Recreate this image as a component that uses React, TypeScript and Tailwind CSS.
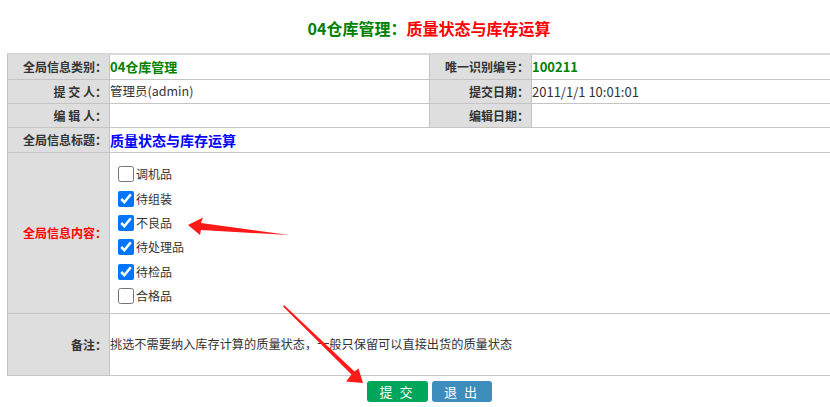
import React from "react";

const options = [
  { name: "调机品", checked: false },
  { name: "待组装", checked: true },
  { name: "不良品", checked: true },
  { name: "待处理品", checked: true },
  { name: "待检品", checked: true },
  { name: "合格品", checked: false },
];

function Label({ children, className = "text-[#333]" }: { children: React.ReactNode; className?: string }) {
  return (
    <div
      className={
        "bg-[#dedede] border-r border-b border-[#c4c4c4] flex items-center justify-end pr-[2px] text-[12px] font-bold " +
        className
      }
    >
      {children}
    </div>
  );
}

function Cell({
  children,
  className = "text-[13px] text-[#333]",
}: {
  children?: React.ReactNode;
  className?: string;
}) {
  return (
    <div className={"border-r border-b border-[#c4c4c4] flex items-center pl-0 " + className}>
      {children}
    </div>
  );
}

export default function App() {
  return (
    <div
      className="relative w-[830px] h-[407px] overflow-hidden bg-white"
      style={{ fontFamily: '"Noto Sans CJK SC", "Noto Sans", sans-serif' }}
    >
      <div className="w-[844px] ml-[7px]">
        <div className="h-[53px] flex items-center justify-center pt-[2px] text-[16px] font-bold">
          <span className="text-[#008000]">04仓库管理：</span>
          <span className="text-[#ff0000]">质量状态与库存运算</span>
        </div>

        <div className="grid grid-cols-[102px_320px_102px_320px] border-l border-[#c4c4c4] border-t-2 border-t-[#d9d9d9]">
          <Label className="h-[25px] text-[#333]">全局信息类别：</Label>
          <Cell className="text-[13px] font-bold text-[#008000]">04仓库管理</Cell>
          <Label>唯一识别编号：</Label>
          <Cell className="text-[13px] font-bold text-[#008000]">100211</Cell>

          <Label className="h-[24px] text-[#333]">提&nbsp;交&nbsp;人：</Label>
          <Cell className="text-[12.5px] text-[#333]">管理员(admin)</Cell>
          <Label>提交日期：</Label>
          <Cell>2011/1/1 10:01:01</Cell>

          <Label className="h-[24px] text-[#333]">编&nbsp;辑&nbsp;人：</Label>
          <Cell />
          <Label>编辑日期：</Label>
          <Cell />

          <Label className="h-[25px] text-[#333]">全局信息标题：</Label>
          <Cell className="col-span-3 text-[14px] font-bold text-[#0000ff]">质量状态与库存运算</Cell>

          <Label className="h-[161px] text-[#ff0000]">全局信息内容：</Label>
          <div className="col-span-3 border-r border-b border-[#c4c4c4] flex flex-col pt-[9px]">
            {options.map((o) => (
              <label key={o.name} className="h-[24.4px] flex items-center text-[12px] text-[#333]">
                <input
                  type="checkbox"
                  defaultChecked={o.checked}
                  className="w-4 h-4 ml-[8px] mr-[2px] accent-[#0075ff]"
                />
                {o.name}
              </label>
            ))}
          </div>

          <Label className="h-[62px] text-[#333]">备注：</Label>
          <Cell className="col-span-3 text-[12.2px] text-[#333]">
            挑选不需要纳入库存计算的质量状态，一般只保留可以直接出货的质量状态
          </Cell>
        </div>

        <div className="flex justify-center gap-[4px] mt-[5px]">
          <button className="w-[61px] h-[21px] rounded-[3px] bg-[#00a65a] text-white text-[13px] leading-none tracking-[2px]">
            提 交
          </button>
          <button className="w-[60px] h-[21px] rounded-[3px] bg-[#3c8dbc] text-white text-[13px] leading-none tracking-[2px]">
            退 出
          </button>
        </div>
      </div>

      <svg className="absolute inset-0 pointer-events-none" width="830" height="407" viewBox="0 0 830 407">
        <polygon points="188,225 203,217.5 201,223 289,235 201,230 200,235" fill="#ff1a1a" />
        <polygon
          points="363,383 358.5,368.5 354.5,371.5 284,305 283,306.5 351.5,374.5 346,381.5"
          fill="#ff1a1a"
        />
      </svg>
    </div>
  );
}
